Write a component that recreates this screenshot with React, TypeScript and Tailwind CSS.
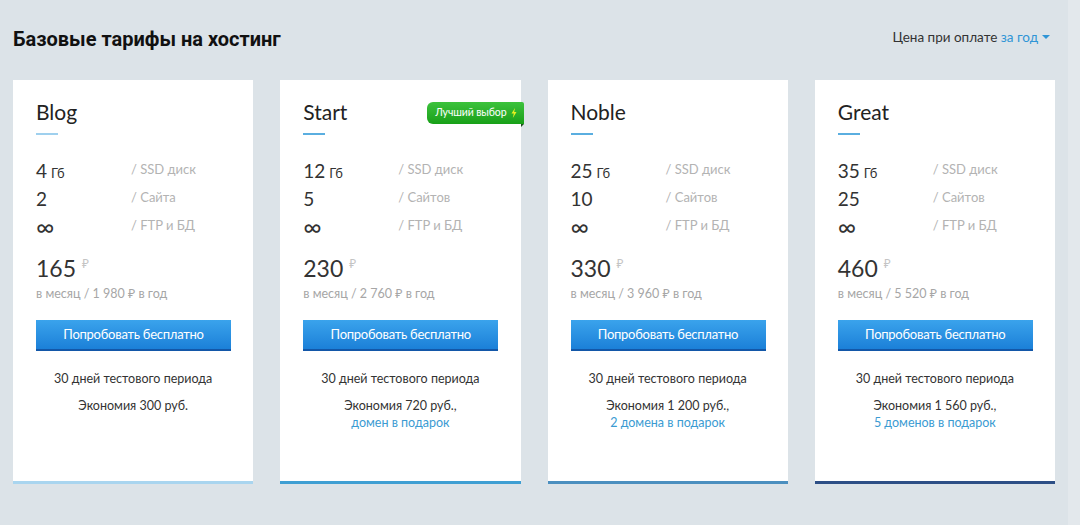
import React from "react";

interface Plan {
  name: string;
  disk: string;
  sites: string;
  sitesLabel: string;
  price: string;
  year: string;
  saving: string;
  gift?: string;
  accent: string;
  underline: string;
  best?: boolean;
}

const plans: Plan[] = [
  {
    name: "Blog",
    disk: "4",
    sites: "2",
    sitesLabel: "/ Сайта",
    price: "165",
    year: "в месяц / 1 980 ₽ в год",
    saving: "Экономия 300 руб.",
    accent: "border-[#a9d5ef]",
    underline: "bg-[#9fd0ee]",
  },
  {
    name: "Start",
    disk: "12",
    sites: "5",
    sitesLabel: "/ Сайтов",
    price: "230",
    year: "в месяц / 2 760 ₽ в год",
    saving: "Экономия 720 руб.,",
    gift: "домен в подарок",
    accent: "border-[#3f9fd3]",
    underline: "bg-[#5aaee0]",
    best: true,
  },
  {
    name: "Noble",
    disk: "25",
    sites: "10",
    sitesLabel: "/ Сайтов",
    price: "330",
    year: "в месяц / 3 960 ₽ в год",
    saving: "Экономия 1 200 руб.,",
    gift: "2 домена в подарок",
    accent: "border-[#4b8fbf]",
    underline: "bg-[#5aaee0]",
  },
  {
    name: "Great",
    disk: "35",
    sites: "25",
    sitesLabel: "/ Сайтов",
    price: "460",
    year: "в месяц / 5 520 ₽ в год",
    saving: "Экономия 1 560 руб.,",
    gift: "5 доменов в подарок",
    accent: "border-[#2d4f86]",
    underline: "bg-[#5aaee0]",
  },
];

const SpecRow: React.FC<{ value: React.ReactNode; label: string }> = ({ value, label }) => (
  <div className="flex items-center h-[28px]">
    <div className="w-[95px] text-[19px] text-[#333] leading-none">{value}</div>
    <div className="text-[13px] text-[#b3b3b3]">{label}</div>
  </div>
);

const PlanCard: React.FC<{ plan: Plan }> = ({ plan }) => (
  <div className={`relative bg-white h-[404px] border-b-[3px] ${plan.accent} flex flex-col`}>
    {plan.best && (
      <div className="absolute right-[-3px] top-[22px]">
        <div className="h-[22px] pl-[8px] pr-[7px] flex items-center gap-[4px] rounded-l-[6px] rounded-tr-[2px] bg-gradient-to-b from-[#3cc23c] to-[#17a017] text-white text-[10.5px] tracking-[-0.1px]">
          Лучший выбор
          <svg width="6" height="10" viewBox="0 0 6 10">
            <path d="M4 0 L0.5 5.5 H2.8 L1.8 10 L5.5 4 H3.2 Z" fill="#e8f020" />
          </svg>
        </div>
        <div className="ml-auto w-0 h-0 border-t-[3px] border-t-[#1d4a1d] border-r-[3px] border-r-transparent" />
      </div>
    )}
    <div className="px-[23px] pt-[20px]">
      <div className="text-[21px] text-[#222] leading-[24px]">{plan.name}</div>
      <div className={`mt-[9px] w-[22px] h-[2px] ${plan.underline}`} />
      <div className="mt-[21px]">
        <SpecRow
          value={
            <span>
              {plan.disk}
              <span className="text-[13px] ml-[4px]">Гб</span>
            </span>
          }
          label="/ SSD диск"
        />
        <SpecRow value={plan.sites} label={plan.sitesLabel} />
        <SpecRow value={<span className="text-[25px] leading-none">∞</span>} label="/ FTP и БД" />
      </div>
      <div className="mt-[13px] flex items-start">
        <span className="text-[23px] text-[#333] leading-[30px]">{plan.price}</span>
        <span className="ml-[6px] mt-[2px] text-[12px] text-[#c4c4c4]">₽</span>
      </div>
      <div className="mt-[2px] text-[12.5px] text-[#a6a6a6]">{plan.year}</div>
      <button className="mt-[16px] w-[195px] h-[31px] text-white text-[13px] tracking-[-0.25px] bg-gradient-to-b from-[#3aa3ec] to-[#1b80d8] border-b-2 border-[#1357a8]">
        Попробовать бесплатно
      </button>
    </div>
    <div className="mt-[19px] text-center text-[12.5px] text-[#333] leading-[17px]">
      <div>30 дней тестового периода</div>
      <div className="mt-[10px]">{plan.saving}</div>
      {plan.gift && <div className="text-[#3b9bd2]">{plan.gift}</div>}
    </div>
  </div>
);

export default function App() {
  return (
    <div
      className="w-[1080px] h-[525px] bg-[#dce3e8] flex"
      style={{ fontFamily: "Lato, 'Noto Sans', sans-serif" }}
    >
      <div className="w-[1068px] pl-[13px] pr-[13px]">
        <div className="h-[80px] flex items-center justify-between">
          <h1
            className="text-[20px] font-bold text-[#111] mt-[-2px]"
            style={{ fontFamily: "Roboto, sans-serif" }}
          >
            Базовые тарифы на хостинг
          </h1>
          <div className="text-[13.5px] text-[#333] mt-[-6px] mr-[5px] flex items-center">
            Цена при оплате&nbsp;<span className="text-[#2f95d6]">за год</span>
            <span className="ml-[4px] w-0 h-0 border-l-[4px] border-l-transparent border-r-[4px] border-r-transparent border-t-[4px] border-t-[#2f95d6]" />
          </div>
        </div>
        <div className="grid grid-cols-4 gap-[27px]">
          {plans.map((p) => (
            <PlanCard key={p.name} plan={p} />
          ))}
        </div>
      </div>
      <div className="flex-1 bg-[#e3e8ec]" />
    </div>
  );
}
